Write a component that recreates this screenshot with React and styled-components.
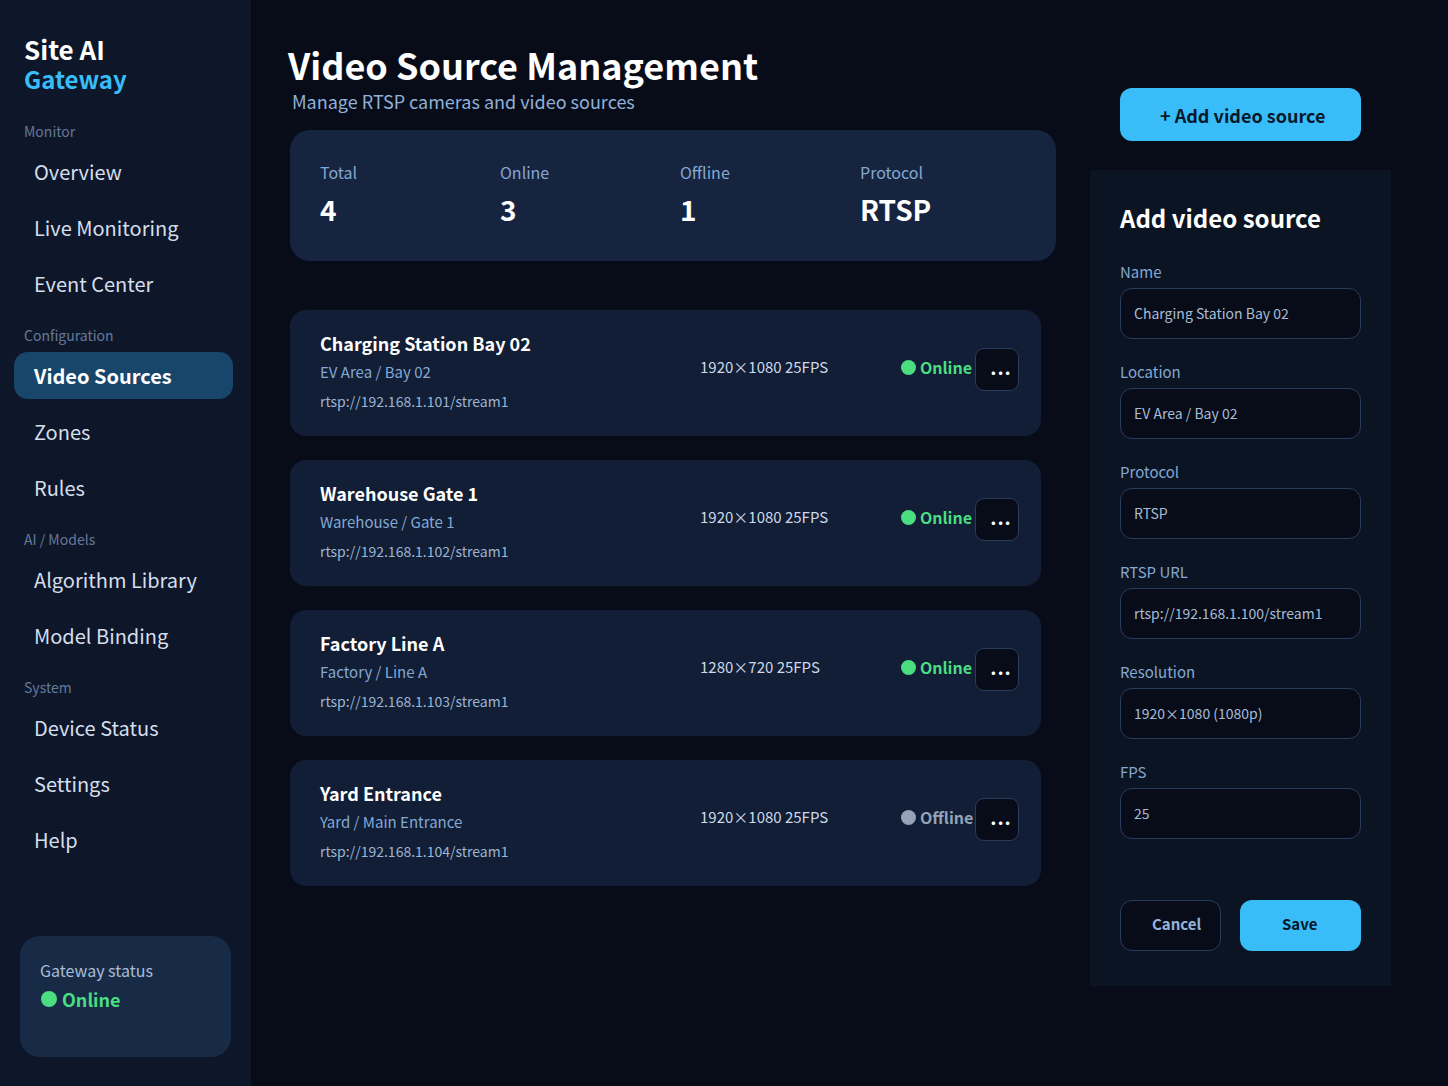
import React from 'react'
import styled, { createGlobalStyle } from 'styled-components'

const GlobalStyle = createGlobalStyle`
  * { box-sizing: border-box; }
  body {
    margin: 0;
    background: #070c18;
    font-family: "Noto Sans CJK SC", "Noto Sans", sans-serif;
    color: #e2e8f0;
  }
`

const Page = styled.div`
  display: flex;
  height: 1086px;
  overflow: hidden;
`

const Sidebar = styled.aside`
  width: 251px;
  flex: none;
  display: flex;
  flex-direction: column;
  padding: 34px 18px 29px 14px;
  background: #0e1729;
`

const Logo = styled.div`
  padding-left: 10px;
  margin-bottom: 19px;
  font-size: 26px;
  font-weight: 700;
  line-height: 30px;
  color: #fff;
`

const LogoAccent = styled.span`
  display: block;
  font-size: 24px;
  line-height: 29px;
  color: #38bdf8;
`

const SectionLabel = styled.div`
  height: 20px;
  margin: 9px 0 7px 10px;
  font-size: 14px;
  line-height: 20px;
  color: #64799b;
`

const NavItem = styled.div`
  height: 47px;
  margin-bottom: 9px;
  padding-left: 20px;
  border-radius: 14px;
  font-size: 20px;
  line-height: 47px;
  font-weight: ${(p) => (p.$active ? 700 : 400)};
  color: ${(p) => (p.$active ? '#fff' : '#d5dfec')};
  background: ${(p) => (p.$active ? '#18466b' : 'transparent')};
`

const GatewayCard = styled.div`
  width: 211px;
  height: 121px;
  margin: auto 0 0 6px;
  padding: 21px 20px;
  border-radius: 20px;
  background: #172b47;
`

const GatewayLabel = styled.div`
  font-size: 16px;
  line-height: 26px;
  color: #a9bcd6;
`

const GatewayState = styled.div`
  display: flex;
  align-items: center;
  gap: 5px;
  margin-top: 2px;
  padding-left: 1px;
  font-size: 18px;
  line-height: 28px;
  font-weight: 700;
  color: #4ade80;
`

const Dot = styled.span`
  width: ${(p) => p.$size || 15}px;
  height: ${(p) => p.$size || 15}px;
  flex: none;
  border-radius: 50%;
  background: ${(p) => p.$color || '#4ade80'};
`

const Main = styled.main`
  width: 839px;
  flex: none;
  padding: 37px 0 0 39px;
`

const Title = styled.h1`
  margin: 0 0 0 -2px;
  font-size: 36px;
  line-height: 54px;
  font-weight: 700;
  color: #fff;
`

const Subtitle = styled.p`
  margin: -4px 0 15px 2px;
  font-size: 18px;
  line-height: 28px;
  color: #8fb1d9;
`

const Stats = styled.section`
  display: grid;
  grid-template-columns: repeat(4, 180px);
  width: 766px;
  height: 131px;
  margin-bottom: 49px;
  padding: 29px 30px;
  border-radius: 20px;
  background: #16243f;
`

const StatLabel = styled.div`
  font-size: 16px;
  line-height: 26px;
  color: #84a8d4;
`

const StatValue = styled.div`
  margin-top: 3px;
  font-size: 28px;
  line-height: 42px;
  font-weight: 700;
  color: #fff;
`

const SourceList = styled.div`
  display: flex;
  flex-direction: column;
  gap: 24px;
  width: 751px;
`

const SourceCard = styled.article`
  display: flex;
  height: 126px;
  padding: 19px 22px 0 30px;
  border-radius: 16px;
  background: #111e35;
`

const SourceInfo = styled.div`
  width: 380px;
  flex: none;
`

const SourceName = styled.div`
  font-size: 18px;
  line-height: 28px;
  font-weight: 700;
  color: #fff;
`

const SourcePlace = styled.div`
  margin-top: 2px;
  font-size: 15px;
  line-height: 26px;
  color: #84a8d4;
`

const SourceUrl = styled.div`
  margin-top: 5px;
  font-size: 14px;
  line-height: 22px;
  color: #9db4d3;
`

const SourceSpec = styled.div`
  width: 201px;
  flex: none;
  margin-top: 26px;
  font-size: 15px;
  line-height: 24px;
  color: #cdd9e8;
`

const SourceStatus = styled.div`
  display: flex;
  align-items: center;
  gap: 4px;
  width: 74px;
  height: 36px;
  flex: none;
  margin-top: 20px;
  font-size: 16px;
  font-weight: 700;
  white-space: nowrap;
  color: ${(p) => (p.$online ? '#4ade80' : '#94a3b8')};
`

const MoreButton = styled.button`
  width: 44px;
  height: 43px;
  flex: none;
  margin-top: 19px;
  padding: 0 0 12px 7px;
  border: 1px solid #2a3c5c;
  border-radius: 9px;
  background: #070c18;
  color: #fff;
  font-family: inherit;
  font-size: 26px;
  font-weight: 400;
  line-height: 24px;
`

const Aside = styled.aside`
  width: 301px;
  flex: none;
  padding-top: 88px;
`

const AddButton = styled.button`
  display: block;
  width: 241px;
  height: 53px;
  margin: 0 0 29px 30px;
  padding: 0 0 0 40px;
  border: 0;
  border-radius: 12px;
  background: #38bdf8;
  color: #07182c;
  font-family: inherit;
  font-size: 18px;
  font-weight: 700;
  text-align: left;
`

const FormPanel = styled.section`
  height: 816px;
  padding: 29px 30px;
  background: #0b1422;
`

const FormTitle = styled.h2`
  margin: 0 0 18px;
  font-size: 24px;
  line-height: 38px;
  font-weight: 700;
  color: #fff;
`

const Field = styled.label`
  display: block;
  height: 100px;
`

const FieldLabel = styled.span`
  display: block;
  height: 33px;
  font-size: 15px;
  line-height: 34px;
  color: #84a8d4;
`

const FieldInput = styled.input`
  display: block;
  width: 100%;
  height: 51px;
  padding: 0 13px 2px;
  border: 1px solid #2a3c5c;
  border-radius: 12px;
  outline: none;
  background: #070c18;
  color: #a9bcd6;
  font-family: inherit;
  font-size: 14px;
`

const FormActions = styled.div`
  display: flex;
  gap: 19px;
  margin-top: 45px;
`

const FormButton = styled.button`
  width: ${(p) => (p.$primary ? 121 : 101)}px;
  height: 51px;
  padding: 0 0 5px ${(p) => (p.$primary ? 42 : 31)}px;
  border: ${(p) => (p.$primary ? '0' : '1px solid #2a3c5c')};
  border-radius: 12px;
  background: ${(p) => (p.$primary ? '#38bdf8' : '#070c18')};
  color: ${(p) => (p.$primary ? '#07182c' : '#94b4da')};
  font-family: inherit;
  font-size: 15px;
  font-weight: 700;
  text-align: left;
`

const navGroups = [
  { label: 'Monitor', items: ['Overview', 'Live Monitoring', 'Event Center'] },
  { label: 'Configuration', items: ['Video Sources', 'Zones', 'Rules'] },
  { label: 'AI / Models', items: ['Algorithm Library', 'Model Binding'] },
  { label: 'System', items: ['Device Status', 'Settings', 'Help'] },
]

const stats = [
  ['Total', '4'],
  ['Online', '3'],
  ['Offline', '1'],
  ['Protocol', 'RTSP'],
]

const sources = [
  { name: 'Charging Station Bay 02', place: 'EV Area / Bay 02', url: 'rtsp://192.168.1.101/stream1', spec: '1920×1080 25FPS', online: true },
  { name: 'Warehouse Gate 1', place: 'Warehouse / Gate 1', url: 'rtsp://192.168.1.102/stream1', spec: '1920×1080 25FPS', online: true },
  { name: 'Factory Line A', place: 'Factory / Line A', url: 'rtsp://192.168.1.103/stream1', spec: '1280×720 25FPS', online: true },
  { name: 'Yard Entrance', place: 'Yard / Main Entrance', url: 'rtsp://192.168.1.104/stream1', spec: '1920×1080 25FPS', online: false },
]

const fields = [
  ['Name', 'Charging Station Bay 02'],
  ['Location', 'EV Area / Bay 02'],
  ['Protocol', 'RTSP'],
  ['RTSP URL', 'rtsp://192.168.1.100/stream1'],
  ['Resolution', '1920×1080 (1080p)'],
  ['FPS', '25'],
]

export default function App() {
  return (
    <Page>
      <GlobalStyle />
      <Sidebar>
        <Logo>
          Site AI
          <LogoAccent>Gateway</LogoAccent>
        </Logo>
        {navGroups.map((group) => (
          <div key={group.label}>
            <SectionLabel>{group.label}</SectionLabel>
            {group.items.map((item) => (
              <NavItem key={item} $active={item === 'Video Sources'}>{item}</NavItem>
            ))}
          </div>
        ))}
        <GatewayCard>
          <GatewayLabel>Gateway status</GatewayLabel>
          <GatewayState>
            <Dot $size={16} />
            Online
          </GatewayState>
        </GatewayCard>
      </Sidebar>

      <Main>
        <Title>Video Source Management</Title>
        <Subtitle>Manage RTSP cameras and video sources</Subtitle>
        <Stats>
          {stats.map(([label, value]) => (
            <div key={label}>
              <StatLabel>{label}</StatLabel>
              <StatValue>{value}</StatValue>
            </div>
          ))}
        </Stats>
        <SourceList>
          {sources.map((source) => (
            <SourceCard key={source.url}>
              <SourceInfo>
                <SourceName>{source.name}</SourceName>
                <SourcePlace>{source.place}</SourcePlace>
                <SourceUrl>{source.url}</SourceUrl>
              </SourceInfo>
              <SourceSpec>{source.spec}</SourceSpec>
              <SourceStatus $online={source.online}>
                <Dot $color={source.online ? '#4ade80' : '#94a3b8'} />
                {source.online ? 'Online' : 'Offline'}
              </SourceStatus>
              <MoreButton>...</MoreButton>
            </SourceCard>
          ))}
        </SourceList>
      </Main>

      <Aside>
        <AddButton>+ Add video source</AddButton>
        <FormPanel>
          <FormTitle>Add video source</FormTitle>
          {fields.map(([label, value]) => (
            <Field key={label}>
              <FieldLabel>{label}</FieldLabel>
              <FieldInput readOnly value={value} />
            </Field>
          ))}
          <FormActions>
            <FormButton>Cancel</FormButton>
            <FormButton $primary>Save</FormButton>
          </FormActions>
        </FormPanel>
      </Aside>
    </Page>
  )
}
